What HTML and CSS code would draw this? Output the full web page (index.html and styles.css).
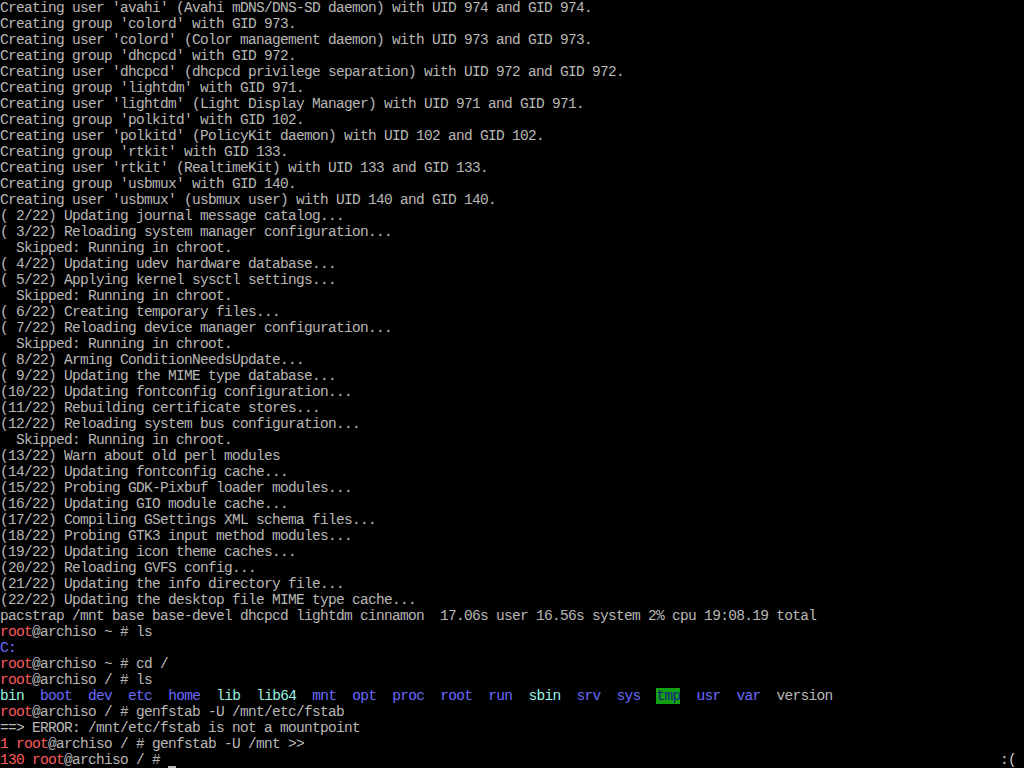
FILE: index.html
```html
<!DOCTYPE html>
<html lang="en">
<head>
    <meta charset="UTF-8">
    <title>tty1</title>
    <link rel="stylesheet" href="styles.css">
</head>
<body>
    <!-- 控制台 -->
    <div class="console">
        <div class="line">Creating user 'avahi' (Avahi mDNS/DNS-SD daemon) with UID 974 and GID 974.</div>
        <div class="line">Creating group 'colord' with GID 973.</div>
        <div class="line">Creating user 'colord' (Color management daemon) with UID 973 and GID 973.</div>
        <div class="line">Creating group 'dhcpcd' with GID 972.</div>
        <div class="line">Creating user 'dhcpcd' (dhcpcd privilege separation) with UID 972 and GID 972.</div>
        <div class="line">Creating group 'lightdm' with GID 971.</div>
        <div class="line">Creating user 'lightdm' (Light Display Manager) with UID 971 and GID 971.</div>
        <div class="line">Creating group 'polkitd' with GID 102.</div>
        <div class="line">Creating user 'polkitd' (PolicyKit daemon) with UID 102 and GID 102.</div>
        <div class="line">Creating group 'rtkit' with GID 133.</div>
        <div class="line">Creating user 'rtkit' (RealtimeKit) with UID 133 and GID 133.</div>
        <div class="line">Creating group 'usbmux' with GID 140.</div>
        <div class="line">Creating user 'usbmux' (usbmux user) with UID 140 and GID 140.</div>
        <div class="line">( 2/22) Updating journal message catalog...</div>
        <div class="line">( 3/22) Reloading system manager configuration...</div>
        <div class="line">  Skipped: Running in chroot.</div>
        <div class="line">( 4/22) Updating udev hardware database...</div>
        <div class="line">( 5/22) Applying kernel sysctl settings...</div>
        <div class="line">  Skipped: Running in chroot.</div>
        <div class="line">( 6/22) Creating temporary files...</div>
        <div class="line">( 7/22) Reloading device manager configuration...</div>
        <div class="line">  Skipped: Running in chroot.</div>
        <div class="line">( 8/22) Arming ConditionNeedsUpdate...</div>
        <div class="line">( 9/22) Updating the MIME type database...</div>
        <div class="line">(10/22) Updating fontconfig configuration...</div>
        <div class="line">(11/22) Rebuilding certificate stores...</div>
        <div class="line">(12/22) Reloading system bus configuration...</div>
        <div class="line">  Skipped: Running in chroot.</div>
        <div class="line">(13/22) Warn about old perl modules</div>
        <div class="line">(14/22) Updating fontconfig cache...</div>
        <div class="line">(15/22) Probing GDK-Pixbuf loader modules...</div>
        <div class="line">(16/22) Updating GIO module cache...</div>
        <div class="line">(17/22) Compiling GSettings XML schema files...</div>
        <div class="line">(18/22) Probing GTK3 input method modules...</div>
        <div class="line">(19/22) Updating icon theme caches...</div>
        <div class="line">(20/22) Reloading GVFS config...</div>
        <div class="line">(21/22) Updating the info directory file...</div>
        <div class="line">(22/22) Updating the desktop file MIME type cache...</div>
        <div class="line">pacstrap /mnt base base-devel dhcpcd lightdm cinnamon  17.06s user 16.56s system 2% cpu 19:08.19 total</div>
        <div class="line"><span class="red">root</span>@archiso ~ # ls</div>
        <div class="line"><span class="blue">C:</span></div>
        <div class="line"><span class="red">root</span>@archiso ~ # cd /</div>
        <div class="line"><span class="red">root</span>@archiso / # ls</div>
        <div class="line"><span class="cyan">bin</span>  <span class="blue">boot</span>  <span class="blue">dev</span>  <span class="blue">etc</span>  <span class="blue">home</span>  <span class="cyan">lib</span>  <span class="cyan">lib64</span>  <span class="blue">mnt</span>  <span class="blue">opt</span>  <span class="blue">proc</span>  <span class="blue">root</span>  <span class="blue">run</span>  <span class="cyan">sbin</span>  <span class="blue">srv</span>  <span class="blue">sys</span>  <span class="sticky">tmp</span>  <span class="blue">usr</span>  <span class="blue">var</span>  version</div>
        <div class="line"><span class="red">root</span>@archiso / # genfstab -U /mnt/etc/fstab</div>
        <div class="line">==&gt; ERROR: /mnt/etc/fstab is not a mountpoint</div>
        <div class="line"><span class="red">1 root</span>@archiso / # genfstab -U /mnt &gt;&gt;</div>
        <div class="line last">
            <span><span class="red">130 root</span>@archiso / # <span class="cursor"> </span></span>
            <span class="rprompt">:(</span>
        </div>
    </div>
</body>
</html>
```

FILE: styles.css
```css
* {
    margin: 0;
    padding: 0;
    box-sizing: border-box;
}

body {
    background: #000;
    width: 1024px;
    height: 768px;
    overflow: hidden;
}

/* 控制台 */
.console {
    display: flex;
    flex-direction: column;
    font-family: 'Liberation Mono', 'DejaVu Sans Mono', monospace;
    font-size: 14.5px;
    letter-spacing: -0.7px;
    color: #b8b8b8;
}

.line {
    height: 16px;
    line-height: 17px;
    white-space: pre;
}

.last {
    display: flex;
    justify-content: space-between;
    padding-right: 8px;
    white-space: normal;
}

.last > span {
    white-space: pre;
}

/* 颜色 */
.red { color: #ff5c5c; }
.blue { color: #6a6aff; }
.cyan { color: #9af5e4; }

.sticky {
    background: #11a011;
    color: #1a1a8a;
}

.cursor {
    display: inline-block;
    width: 8px;
    height: 16px;
    vertical-align: top;
    border-bottom: 2px solid #b8b8b8;
}

.rprompt {
    color: #c8c8c8;
}
```
